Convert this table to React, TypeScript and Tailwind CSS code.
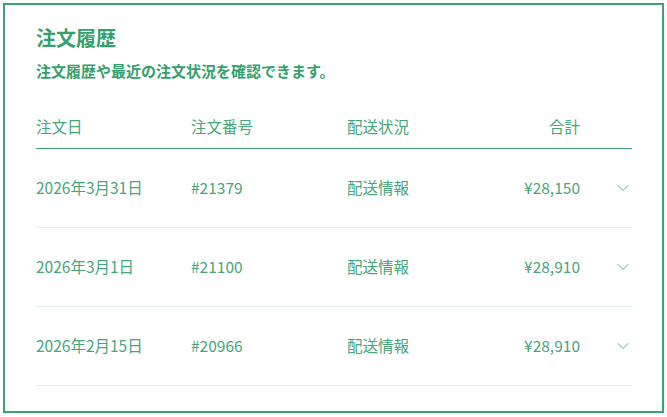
import React from 'react';
import { ChevronDown } from 'lucide-react';

interface Order {
  date: string;
  number: string;
  status: string;
  total: string;
}

const orders: Order[] = [
  { date: '2026年3月31日', number: '#21379', status: '配送情報', total: '¥28,150' },
  { date: '2026年3月1日', number: '#21100', status: '配送情報', total: '¥28,910' },
  { date: '2026年2月15日', number: '#20966', status: '配送情報', total: '¥28,910' },
];

const cols = 'grid grid-cols-[155px_156px_130px_103px_1fr] items-center';

const App: React.FC = () => {
  return (
    <div className="p-[3px] bg-white" style={{ fontFamily: '"Noto Sans CJK JP", "Noto Sans", sans-serif' }}>
      <div className="h-[410px] border-2 border-[#3ba272] pl-[31px] pr-[30px] pt-[19px]">
        {/* Heading */}
        <h2 className="text-[20px] leading-[28px] font-bold text-[#34a06c]">注文履歴</h2>
        <p className="mt-[9px] text-[15px] leading-[20px] font-bold text-[#34a06c]">
          注文履歴や最近の注文状況を確認できます。
        </p>

        {/* Table header */}
        <div className={`${cols} mt-[25px] h-[43px] border-b border-[#3ba272] text-[15.5px] text-[#47a57a]`}>
          <span>注文日</span>
          <span>注文番号</span>
          <span>配送状況</span>
          <span className="text-right">合計</span>
          <span />
        </div>

        {/* Rows */}
        {orders.map((o) => (
          <div
            key={o.number}
            className={`${cols} h-[79px] border-b border-[#dcefe9] text-[15.5px] text-[#47a57a]`}
          >
            <span>{o.date}</span>
            <span>{o.number}</span>
            <span>{o.status}</span>
            <span className="text-right">{o.total}</span>
            <span className="flex justify-end">
              <ChevronDown size={20} strokeWidth={1.2} className="text-[#5aae88] mr-[-1px]" />
            </span>
          </div>
        ))}
      </div>
    </div>
  );
};

export default App;
